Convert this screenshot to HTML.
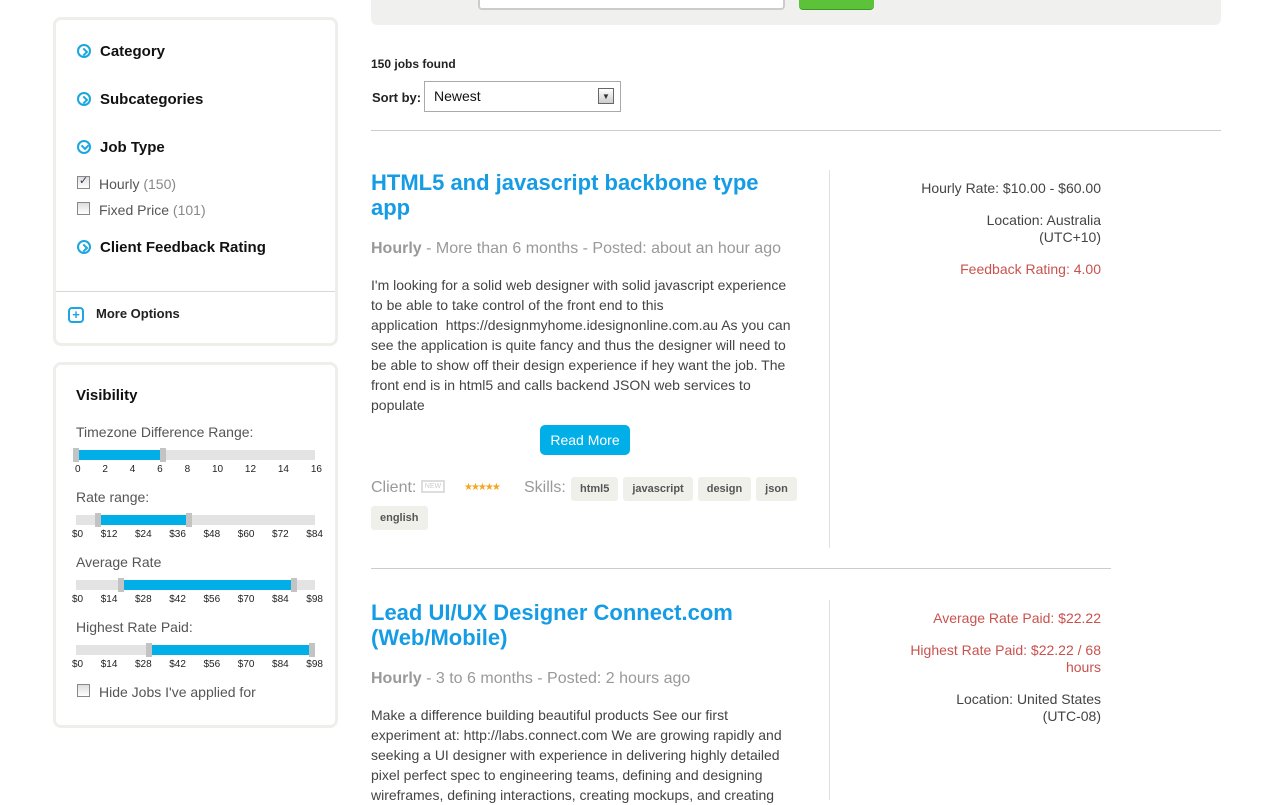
<!DOCTYPE html>
<html><head><meta charset="utf-8"><style>
*{margin:0;padding:0;box-sizing:border-box}
body{width:1280px;height:800px;overflow:hidden;background:#fff;font-family:"Liberation Sans",Arial,sans-serif;color:#333;position:relative}
.a{position:absolute;white-space:nowrap}
.box{position:absolute;border:3px solid #eeeeea;border-radius:8px;background:#fff}
.h{font-weight:bold;font-size:15px;color:#111}
.ic{position:absolute;width:14px;height:14px;border:2px solid #1aa6e0;border-radius:50%}
.ic:after{content:"";position:absolute;left:2px;top:3px;width:4px;height:4px;border-right:2px solid #1aa6e0;border-bottom:2px solid #1aa6e0;transform:rotate(-45deg)}
.ic.d:after{left:3px;top:1px;transform:rotate(45deg)}
.cb{position:absolute;width:13px;height:13px;border:1px solid #888;background:linear-gradient(#ddd,#fff)}
.lbl{font-size:14px;color:#555}
.gr{color:#888}
.track{position:absolute;height:10px;background:#e3e3e3;left:76px;width:239px}
.fill{position:absolute;top:0;height:10px;background:#00aee8}
.kn{position:absolute;top:-2px;width:6px;height:14px;background:#c3c3c3}
.tk{position:absolute;font-size:10px;color:#222;width:239px;left:72px;display:flex;justify-content:space-between}
.blue{color:#159ce4;font-weight:bold;font-size:22px;line-height:25px}
.meta{font-size:16px;color:#999}
.desc{font-size:14px;color:#444;line-height:20px;width:422px}
.r{position:absolute;text-align:right;font-size:14px;color:#444;right:179px;line-height:17px}
.red{color:#c9524d}
.tag{display:inline-block;background:#f0f0ea;border-radius:3px;font-size:11px;font-weight:bold;color:#555;padding:6px 9px;margin-right:5px}
</style></head><body>
<div style="position:absolute;left:371px;top:-10px;width:850px;height:35px;background:#f0f0ee;border-radius:6px"></div>
<div style="position:absolute;left:478px;top:-10px;width:307px;height:20px;background:#fff;border:2px solid #ccc;border-radius:4px"></div>
<div style="position:absolute;left:799px;top:-10px;width:75px;height:20px;background:#5cc23a;border-radius:4px;border-bottom:1px solid #3a9a22"></div>

<div class="box" style="left:53px;top:17px;width:285px;height:329px"></div>
<div class="ic" style="left:77px;top:44px"></div><div class="a h" style="left:100px;top:43px">Category</div>
<div class="ic" style="left:77px;top:92px"></div><div class="a h" style="left:100px;top:91px">Subcategories</div>
<div class="ic d" style="left:77px;top:140px"></div><div class="a h" style="left:100px;top:139px">Job Type</div>
<div class="cb" style="left:77px;top:176px"></div><div class="a" style="left:79px;top:174px;font-size:11px;color:#335">✓</div>
<div class="a lbl" style="left:99px;top:176px">Hourly <span class="gr">(150)</span></div>
<div class="cb" style="left:77px;top:202px"></div>
<div class="a lbl" style="left:99px;top:202px">Fixed Price <span class="gr">(101)</span></div>
<div class="ic" style="left:77px;top:240px"></div><div class="a h" style="left:100px;top:239px">Client Feedback Rating</div>
<div style="position:absolute;left:56px;top:291px;width:279px;height:1px;background:#d8d8dc"></div>
<div style="position:absolute;left:68px;top:307px;width:16px;height:16px;border:2px solid #1aa6e0;border-radius:4px;color:#1aa6e0;font-size:13px;font-weight:bold;line-height:11px;text-align:center">+</div>
<div class="a" style="left:96px;top:306px;font-size:13px;font-weight:bold;color:#222">More Options</div>

<div class="box" style="left:53px;top:362px;width:285px;height:366px"></div>
<div class="a h" style="left:76px;top:387px;font-size:15px">Visibility</div>
<div class="a lbl" style="left:76px;top:424px">Timezone Difference Range:</div>
<div class="track" style="top:450px"><div class="fill" style="left:0;width:87px"></div><div class="kn" style="left:-3px"></div><div class="kn" style="left:84px"></div></div>
<div class="tk" style="top:464px;left:75px;width:247px"><span>0</span><span>2</span><span>4</span><span>6</span><span>8</span><span>10</span><span>12</span><span>14</span><span>16</span></div>
<div class="a lbl" style="left:76px;top:489px">Rate range:</div>
<div class="track" style="top:515px"><div class="fill" style="left:22px;width:90px"></div><div class="kn" style="left:19px"></div><div class="kn" style="left:110px"></div></div>
<div class="tk" style="top:529px;width:251px"><span>$0</span><span>$12</span><span>$24</span><span>$36</span><span>$48</span><span>$60</span><span>$72</span><span>$84</span></div>
<div class="a lbl" style="left:76px;top:554px">Average Rate</div>
<div class="track" style="top:580px"><div class="fill" style="left:45px;width:170px"></div><div class="kn" style="left:42px"></div><div class="kn" style="left:215px"></div></div>
<div class="tk" style="top:594px;width:251px"><span>$0</span><span>$14</span><span>$28</span><span>$42</span><span>$56</span><span>$70</span><span>$84</span><span>$98</span></div>
<div class="a lbl" style="left:76px;top:619px">Highest Rate Paid:</div>
<div class="track" style="top:645px"><div class="fill" style="left:73px;width:160px"></div><div class="kn" style="left:70px"></div><div class="kn" style="left:233px"></div></div>
<div class="tk" style="top:659px;width:251px"><span>$0</span><span>$14</span><span>$28</span><span>$42</span><span>$56</span><span>$70</span><span>$84</span><span>$98</span></div>
<div class="cb" style="left:77px;top:684px"></div>
<div class="a lbl" style="left:99px;top:684px">Hide Jobs I've applied for</div>

<div class="a" style="left:371px;top:57px;font-size:12px;font-weight:bold;color:#222">150 jobs found</div>
<div class="a" style="left:372px;top:90px;font-size:13px;font-weight:bold;color:#222">Sort by:</div>
<div style="position:absolute;left:424px;top:81px;width:197px;height:31px;border:1px solid #aaa;background:#fff"></div>
<div class="a" style="left:434px;top:88px;font-size:14px;color:#111">Newest</div>
<div style="position:absolute;left:598px;top:88px;width:16px;height:16px;border:1px solid #666;background:linear-gradient(#fff,#ccc);font-size:8px;text-align:center;line-height:15px">▼</div>
<div style="position:absolute;left:371px;top:130px;width:850px;height:1px;background:#ccc"></div>

<div class="a blue" style="left:371px;top:170px">HTML5 and javascript backbone type<br>app</div>
<div class="a meta" style="left:371px;top:240px"><b>Hourly</b> - More than 6 months - Posted: about an hour ago</div>
<div class="a desc" style="left:371px;top:275px;white-space:normal">I'm looking for a solid web designer with solid javascript experience to be able to take control of the front end to this<br>application &nbsp;https://designmyhome.idesignonline.com.au As you can see the application is quite fancy and thus the designer will need to be able to show off their design experience if hey want the job. The front end is in html5 and calls backend JSON web services to populate</div>
<div style="position:absolute;left:540px;top:425px;width:90px;height:30px;background:#00aee8;border-radius:5px;color:#fff;font-size:14px;text-align:center;line-height:30px">Read More</div>
<div class="a meta" style="left:371px;top:479px">Client: <span style="display:inline-block;border:2px solid #ddd;font-size:7px;color:#ccc;padding:1px 2px;vertical-align:4px">NEW</span></div>
<div class="a" style="left:464px;top:482px;font-size:10px;color:#f5a623;letter-spacing:-2px">★★★★★</div>
<div class="a meta" style="left:524px;top:479px">Skills:</div>
<div class="a" style="left:571px;top:477px"><span class="tag">html5</span><span class="tag">javascript</span><span class="tag">design</span><span class="tag">json</span></div>
<div class="a" style="left:371px;top:506px"><span class="tag">english</span></div>
<div style="position:absolute;left:829px;top:170px;width:1px;height:378px;background:#e0e0e0"></div>
<div class="r" style="top:180px">Hourly Rate: $10.00 - $60.00</div>
<div class="r" style="top:212px">Location: Australia<br>(UTC+10)</div>
<div class="r red" style="top:261px">Feedback Rating: 4.00</div>
<div style="position:absolute;left:371px;top:568px;width:740px;height:1px;background:#ccc"></div>

<div class="a blue" style="left:371px;top:600px">Lead UI/UX Designer Connect.com<br>(Web/Mobile)</div>
<div class="a meta" style="left:371px;top:670px"><b>Hourly</b> - 3 to 6 months - Posted: 2 hours ago</div>
<div class="a desc" style="left:371px;top:705px;white-space:normal">Make a difference building beautiful products See our first experiment at: http://labs.connect.com We are growing rapidly and seeking a UI designer with experience in delivering highly detailed pixel perfect spec to engineering teams, defining and designing wireframes, defining interactions, creating mockups, and creating</div>
<div style="position:absolute;left:829px;top:600px;width:1px;height:200px;background:#e0e0e0"></div>
<div class="r red" style="top:610px">Average Rate Paid: $22.22</div>
<div class="r red" style="top:642px">Highest Rate Paid: $22.22 / 68<br>hours</div>
<div class="r" style="top:691px">Location: United States<br>(UTC-08)</div>
</body></html>
